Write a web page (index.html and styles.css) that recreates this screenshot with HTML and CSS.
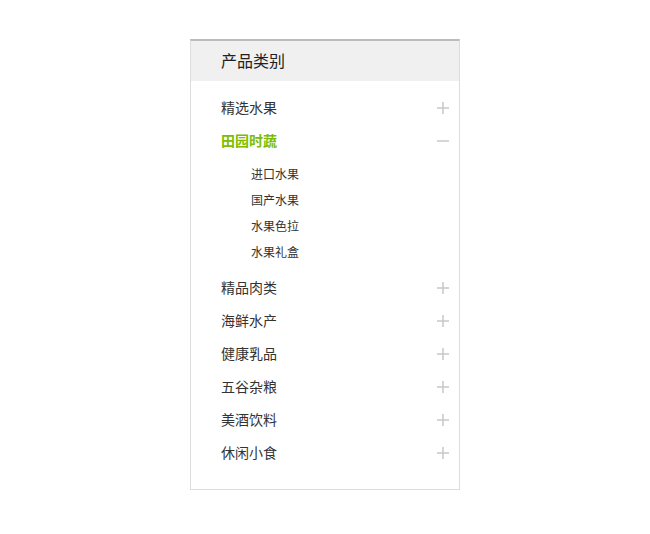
FILE: index.html
```html
<!DOCTYPE html>
<html lang="zh">
<head>
<meta charset="utf-8">
<title>产品类别</title>
<link rel="stylesheet" href="styles.css">
</head>
<body>
<div class="panel">
  <div class="panel-head">产品类别</div>
  <ul class="menu">
    <li class="item"><span class="label">精选水果</span><svg class="ico" viewBox="0 0 12 12"><path d="M0 6H12M6 0V12"/></svg></li>
    <li class="item active"><span class="label">田园时蔬</span><svg class="ico" viewBox="0 0 12 12"><path d="M0 6H12"/></svg></li>
    <li class="sub">
      <ul class="submenu">
        <li>进口水果</li>
        <li>国产水果</li>
        <li>水果色拉</li>
        <li>水果礼盒</li>
      </ul>
    </li>
    <li class="item"><span class="label">精品肉类</span><svg class="ico" viewBox="0 0 12 12"><path d="M0 6H12M6 0V12"/></svg></li>
    <li class="item"><span class="label">海鲜水产</span><svg class="ico" viewBox="0 0 12 12"><path d="M0 6H12M6 0V12"/></svg></li>
    <li class="item"><span class="label">健康乳品</span><svg class="ico" viewBox="0 0 12 12"><path d="M0 6H12M6 0V12"/></svg></li>
    <li class="item"><span class="label">五谷杂粮</span><svg class="ico" viewBox="0 0 12 12"><path d="M0 6H12M6 0V12"/></svg></li>
    <li class="item"><span class="label">美酒饮料</span><svg class="ico" viewBox="0 0 12 12"><path d="M0 6H12M6 0V12"/></svg></li>
    <li class="item"><span class="label">休闲小食</span><svg class="ico" viewBox="0 0 12 12"><path d="M0 6H12M6 0V12"/></svg></li>
  </ul>
</div>
</body>
</html>
```
FILE: styles.css
```css
html, body {
  margin: 0;
  padding: 0;
  background: #fff;
}
body {
  font-family: "Microsoft YaHei", "Noto Sans CJK SC", sans-serif;
  color: #333;
}
.panel {
  box-sizing: border-box;
  width: 270px;
  margin: 39px 0 0 190px;
  border: 1px solid #ddd;
  border-top: 2px solid #bbb;
}
.panel-head {
  height: 40px;
  box-sizing: border-box;
  line-height: 38px;
  padding: 0 0 2px 30px;
  background: #f0f0f0;
  font-size: 16px;
  color: #222;
}
.menu {
  list-style: none;
  margin: 0;
  padding: 10px 0 20px;
}
.item {
  height: 33px;
  display: flex;
  align-items: center;
  justify-content: space-between;
  padding: 0 10px 0 30px;
  font-size: 14px;
  color: #333;
}
.label {
  padding-bottom: 2px;
}
.item.active {
  color: #7cbd00;
  font-weight: bold;
}
.ico {
  width: 12px;
  height: 12px;
  fill: none;
  stroke: #c8c8c8;
  stroke-width: 1.5;
}
.sub {
  padding: 4px 0 6px;
}
.submenu {
  list-style: none;
  margin: 0;
  padding: 0 0 0 60px;
}
.submenu li {
  height: 26px;
  line-height: 26px;
  font-size: 12px;
  color: #333;
}
```
